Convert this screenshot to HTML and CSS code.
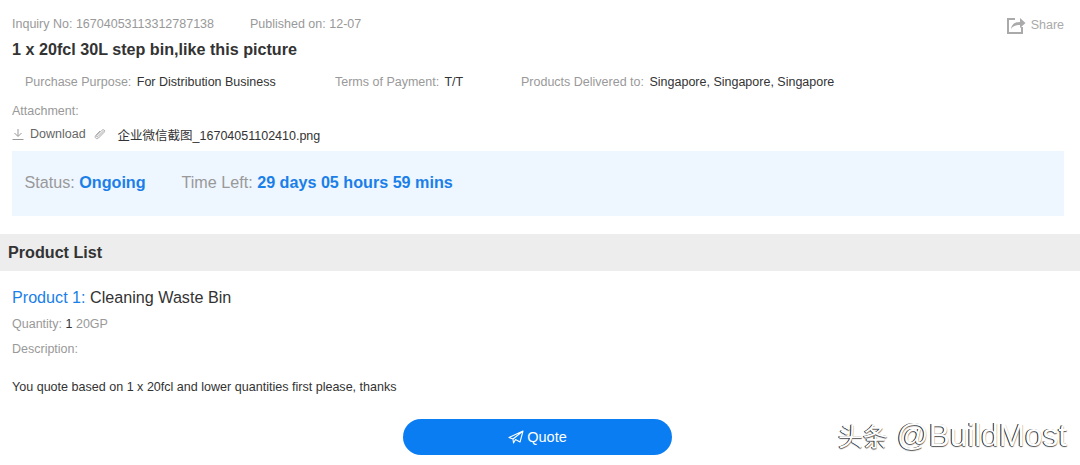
FILE: index.html
```html
<!DOCTYPE html>
<html lang="en">
<head>
    <meta charset="UTF-8">
    <title>Inquiry Detail</title>
    <link rel="stylesheet" href="styles.css">
</head>
<body>
    <div class="inquiry">
        <div class="meta-row">
            <span>Inquiry No: 16704053113312787138</span>
            <span>Published on: 12-07</span>
            <a class="share">
                <svg width="20" height="20" viewBox="0 0 20 20" fill="none" stroke="#aaa" stroke-width="2">
                    <path d="M9 4H2v14h14v-6"/>
                    <path d="M5 14c1-5 4-7 9-7V3l5.500 5-5.500 5V10c-4 0-7 1-9 4z" fill="#aaa" stroke="none"/>
                </svg>
                Share
            </a>
        </div>
        <h1>1 x 20fcl 30L step bin,like this picture</h1>
        <div class="terms">
            <span class="term-purpose"><em>Purchase Purpose:</em> For Distribution Business</span>
            <span class="term-payment"><em>Terms of Payment:</em> T/T</span>
            <span><em>Products Delivered to:</em> Singapore, Singapore, Singapore</span>
        </div>
        <div class="attach-label">Attachment:</div>
        <div class="attach-row">
            <svg class="icon-download" width="12" height="12" viewBox="0 0 12 12" fill="none" stroke="#999" stroke-width="1">
                <path d="M6 1v7M2.500 5L6 8.500 9.500 5M0.500 11.500h11"/>
            </svg>
            <span class="download">Download</span>
            <svg class="icon-clip" width="12" height="12" viewBox="0 0 12 12" fill="none" stroke="#aaa" stroke-width="1">
                <path d="M10 2.500L4 8.500c-1 1-2 0-1.200-1L8 2.200c1.800-1.500 3.500.5 2.200 2L4.500 10c-2 1.800-4.500-.5-2.700-2.700L6 3"/>
            </svg>
            <a class="file">企业微信截图_16704051102410.png</a>
        </div>
        <div class="status-box">
            <span class="status-item"><em>Status:</em> <b>Ongoing</b></span>
            <span><em>Time Left:</em> <b>29 days 05 hours 59 mins</b></span>
        </div>
    </div>

    <h2 class="list-title">Product List</h2>

    <div class="product">
        <div class="product-name"><span>Product 1:</span> Cleaning Waste Bin</div>
        <div class="qty">Quantity: <b>1</b> 20GP</div>
        <div class="desc-label">Description:</div>
        <p class="desc">You quote based on 1 x 20fcl and lower quantities first please, thanks</p>
    </div>

    <div class="actions">
        <button class="quote-btn">
            <svg width="16" height="14" viewBox="0 0 16 14" fill="none" stroke="#fff" stroke-width="1.100" stroke-linejoin="round">
                <path d="M15 1L1 7.500l4 1.500L15 1l-3 11-4.500-2.500L5.500 13 5 9"/>
            </svg>
            Quote
        </button>
        <div class="watermark"><span class="watermark-cjk">头条</span> @BuildMost</div>
    </div>
</body>
</html>
```

FILE: styles.css
```css
* {
    box-sizing: border-box;
}
body {
    margin: 0;
    font-family: "Liberation Sans", Arial, "Noto Sans CJK SC", sans-serif;
    font-size: 12.5px;
    color: #333;
    background-color: #fff;
    overflow: hidden;
}
em {
    font-style: normal;
    color: #999;
}
.inquiry {
    padding: 16px 16px 0 12px;
}
.meta-row {
    display: flex;
    height: 16px;
    line-height: 16px;
    color: #999;
}
.meta-row span:first-child {
    width: 238px;
}
.share {
    display: flex;
    align-items: center;
    gap: 5px;
    margin-left: auto;
    margin-top: 2px;
    color: #aaa;
}
h1 {
    margin: 7px 0 0;
    font-size: 16.150px;
    line-height: 20px;
    color: #333;
}
.terms {
    display: flex;
    margin-top: 15px;
    padding-left: 13px;
    line-height: 16px;
}
.terms em {
    margin-right: 2px;
}
.term-purpose {
    width: 310px;
}
.term-payment {
    width: 186px;
}
.attach-label {
    margin-top: 13px;
    line-height: 16px;
    color: #999;
}
.attach-row {
    display: flex;
    align-items: center;
    margin-top: 7px;
    height: 16px;
}
.download {
    margin-left: 6px;
    color: #666;
}
.icon-clip {
    margin-left: 8px;
}
.file {
    margin-left: 12px;
    color: #333;
}
.status-box {
    display: flex;
    align-items: center;
    height: 65px;
    margin-top: 9px;
    padding: 0 0 2px 12.500px;
    background-color: #eef6ff;
    font-size: 16.150px;
}
.status-box b {
    color: #1a7fe8;
}
.status-item {
    width: 157px;
}
.list-title {
    margin: 18px 0 0;
    height: 37px;
    padding-left: 8px;
    background-color: #ededed;
    font-size: 16.150px;
    line-height: 36px;
    color: #333;
}
.product {
    padding: 16px 12px 0;
}
.product-name {
    font-size: 16.150px;
    line-height: 20px;
    color: #333;
}
.product-name span {
    color: #1a7fe8;
}
.qty {
    margin-top: 9px;
    line-height: 16px;
    color: #999;
}
.qty b {
    font-weight: normal;
    color: #333;
}
.desc-label {
    margin-top: 9px;
    line-height: 16px;
    color: #999;
}
.desc {
    margin: 22px 0 0;
    font-size: 12.550px;
    line-height: 16px;
    color: #333;
}
.actions {
    display: flex;
    justify-content: center;
    position: relative;
    margin-top: 24px;
    padding-right: 5px;
}
.quote-btn {
    display: flex;
    align-items: center;
    justify-content: center;
    gap: 3px;
    width: 269px;
    height: 36px;
    padding-bottom: 2px;
    border: none;
    border-radius: 18px;
    background-color: #0a7df2;
    color: #fff;
    font-family: inherit;
    font-size: 14.500px;
    cursor: pointer;
}
.watermark {
    position: absolute;
    right: 13px;
    top: -2px;
    font-size: 31.500px;
    line-height: 36px;
    white-space: nowrap;
    color: #fff;
    text-shadow: -1px 0 0 #222, 0 1px 1px #555;
}
.watermark-cjk {
    font-size: 25px;
}
```
